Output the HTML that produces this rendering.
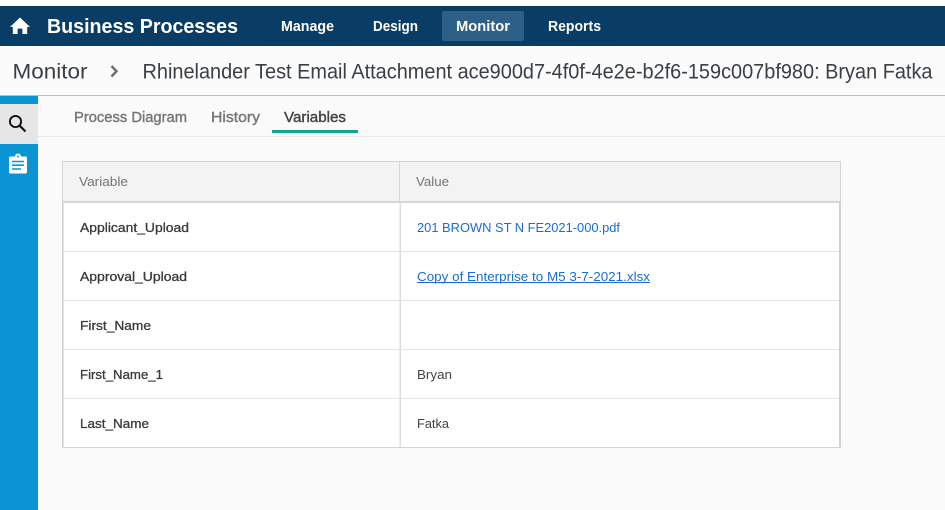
<!DOCTYPE html>
<html><head><meta charset="utf-8"><title>Business Processes</title>
<style>
html,body{margin:0;padding:0;background:#fafafa;overflow:hidden}
svg{display:block}
text{font-family:"Liberation Sans",sans-serif;white-space:pre}
.nav{font-size:14.5px;font-weight:700;fill:#fff}
.h{font-size:21.5px;fill:#3a3f44}
.tab{font-size:14.5px;fill:#777;stroke:#777;stroke-width:.4px}
.th{font-size:13px;fill:#757575}
.k{font-size:13px;fill:#3a3a3a;stroke:#3a3a3a;stroke-width:.3px}
.v{font-size:13px;fill:#444}
.a{font-size:13px;fill:#1a6dd0}
</style></head><body>
<svg width="945" height="510" viewBox="0 0 945 510" xmlns="http://www.w3.org/2000/svg">
<rect width="945" height="510" fill="#fafafa"/>
<rect width="945" height="6" fill="#fff"/>
<rect y="6" width="945" height="40" fill="#0a3d66"/>
<rect y="46" width="945" height="49" fill="#fbfbfb"/>
<rect y="95" width="945" height="1" fill="#bdbdbd"/>
<path d="M20 17.5 L30 27 H27.2 V34 H22.4 V28.6 H17.6 V34 H12.8 V27 H10 Z" fill="#fff"/>
<text x="47" y="33" font-size="20.5" font-weight="700" fill="#fff" textLength="191" lengthAdjust="spacingAndGlyphs">Business Processes</text>
<rect x="266" y="40" width="86" height="1" fill="#08355a"/>
<rect x="360" y="40" width="72" height="1" fill="#08355a"/>
<rect x="535" y="40" width="80" height="1" fill="#08355a"/>
<rect x="442" y="11" width="82" height="30" rx="2" fill="#2d5f87"/>
<text class="nav" x="281" y="31" textLength="53" lengthAdjust="spacingAndGlyphs">Manage</text>
<text class="nav" x="373" y="31" textLength="45" lengthAdjust="spacingAndGlyphs">Design</text>
<text class="nav" x="456" y="31" textLength="54" lengthAdjust="spacingAndGlyphs">Monitor</text>
<text class="nav" x="548" y="31" textLength="53" lengthAdjust="spacingAndGlyphs">Reports</text>
<text class="h" x="12.5" y="78.7" textLength="75" lengthAdjust="spacingAndGlyphs">Monitor</text>
<path d="M111.5 66 L116.5 71.3 L111.5 76.5" fill="none" stroke="#707070" stroke-width="2.5"/>
<text class="h" x="142.5" y="78.7" textLength="790" lengthAdjust="spacingAndGlyphs">Rhinelander Test Email Attachment ace900d7-4f0f-4e2e-b2f6-159c007bf980: Bryan Fatka</text>
<rect y="96" width="38" height="414" fill="#0a94d3"/>
<rect y="104" width="38" height="40" fill="#e6e6e6"/>
<circle cx="15.5" cy="121.5" r="5.6" fill="none" stroke="#111" stroke-width="1.9"/>
<path d="M19.8 125.8 L25.5 131.5" stroke="#111" stroke-width="2.2"/>
<path d="M10.5 156.5 H15 A3 3 0 0 1 21 156.5 H25.5 Q27 156.5 27 158 V172 Q27 173.5 25.5 173.5 H10.5 Q9 173.5 9 172 V158 Q9 156.5 10.5 156.5 Z" fill="#fff"/>
<circle cx="18" cy="156.5" r="1" fill="#0a94d3"/>
<path d="M12 161.5 H24 M12 165.2 H24 M12 169 H21" stroke="#0a94d3" stroke-width="1.6"/>
<rect x="38" y="136" width="907" height="1" fill="#e8e8e8"/>
<text class="tab" x="74" y="122" textLength="113" lengthAdjust="spacingAndGlyphs">Process Diagram</text>
<text class="tab" x="211" y="122" textLength="49" lengthAdjust="spacingAndGlyphs">History</text>
<text class="tab" x="284" y="122" textLength="62" lengthAdjust="spacingAndGlyphs" style="fill:#444;stroke:#444">Variables</text>
<rect x="272" y="130" width="86" height="3" fill="#0aa98a"/>
<rect x="62.5" y="161.5" width="778" height="286" fill="#fff" stroke="#d4d4d4"/>
<rect x="63" y="162" width="777" height="39" fill="#f3f3f3"/>
<rect x="63" y="201" width="777" height="2" fill="#d6d6d6"/>
<rect x="63" y="202" width="1" height="245" fill="#e0e0e0"/>
<rect x="839" y="202" width="2" height="245" fill="#d0d0d0"/>
<rect x="399" y="162" width="1" height="39" fill="#d8d8d8"/>
<rect x="399.5" y="202" width="1.5" height="245" fill="#dcdcdc"/>
<rect x="64" y="251" width="775" height="1" fill="#e6e6e6"/>
<rect x="64" y="300" width="775" height="1" fill="#e6e6e6"/>
<rect x="64" y="349" width="775" height="1" fill="#e6e6e6"/>
<rect x="64" y="398" width="775" height="1" fill="#e6e6e6"/>
<text class="th" x="79" y="186" textLength="49" lengthAdjust="spacingAndGlyphs">Variable</text>
<text class="th" x="416" y="186" textLength="33" lengthAdjust="spacingAndGlyphs">Value</text>
<text class="k" x="80" y="232" textLength="109" lengthAdjust="spacingAndGlyphs">Applicant_Upload</text>
<text class="k" x="80" y="281" textLength="107" lengthAdjust="spacingAndGlyphs">Approval_Upload</text>
<text class="k" x="80" y="330" textLength="71" lengthAdjust="spacingAndGlyphs">First_Name</text>
<text class="k" x="80" y="379" textLength="83" lengthAdjust="spacingAndGlyphs">First_Name_1</text>
<text class="k" x="80" y="428" textLength="69" lengthAdjust="spacingAndGlyphs">Last_Name</text>
<text class="a" x="417" y="232" textLength="203" lengthAdjust="spacingAndGlyphs">201 BROWN ST N FE2021-000.pdf</text>
<text class="a" x="417" y="281" textLength="233" lengthAdjust="spacingAndGlyphs">Copy of Enterprise to M5 3-7-2021.xlsx</text>
<rect x="417" y="282" width="233" height="1" fill="#1a6dd0"/>
<text class="v" x="417" y="379" textLength="35" lengthAdjust="spacingAndGlyphs">Bryan</text>
<text class="v" x="417" y="428" textLength="32" lengthAdjust="spacingAndGlyphs">Fatka</text>
</svg>
</body></html>
